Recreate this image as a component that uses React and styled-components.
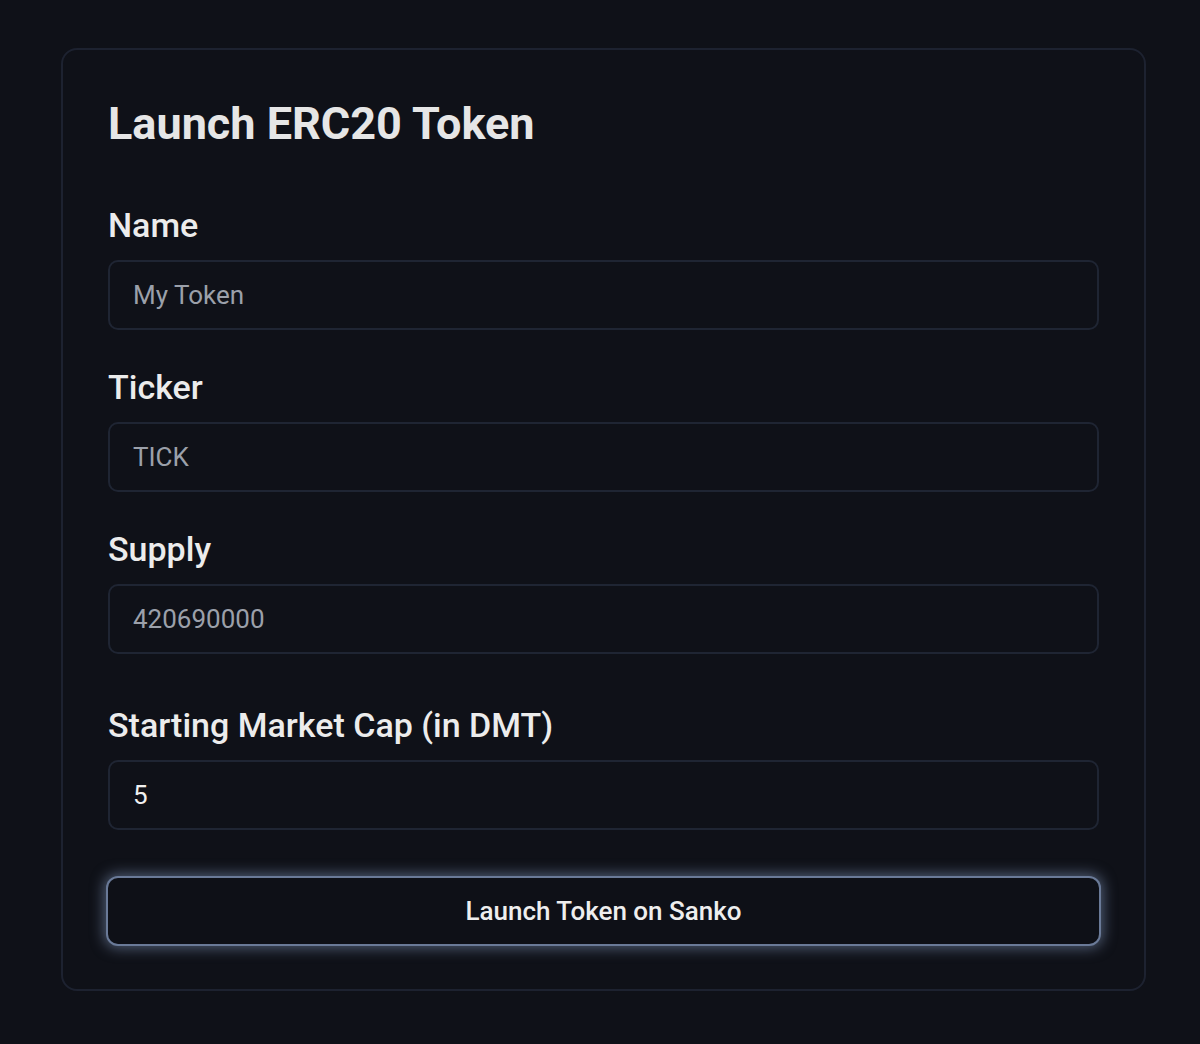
import React from 'react'
import styled, {createGlobalStyle} from "styled-components";

const GlobalStyle = createGlobalStyle`
  html, body {
    margin: 0;
    background: #0f1118;
  }
  body {
    font-family: Roboto, "Liberation Sans", sans-serif;
  }
`;

const fields = [
    {label: "Name", placeholder: "My Token"},
    {label: "Ticker", placeholder: "TICK"},
    {label: "Supply", placeholder: "420690000"},
];

export default function App() {
    return (
        <Page>
            <GlobalStyle/>
            <Card>
                <Title>Launch ERC20 Token</Title>
                {fields.map(f => (
                    <Field key={f.label}>
                        <Label>{f.label}</Label>
                        <Input placeholder={f.placeholder}/>
                    </Field>
                ))}
                <Field $last>
                    <Label>Starting Market Cap (in DMT)</Label>
                    <Input defaultValue="5"/>
                </Field>
                <LaunchButton>Launch Token on Sanko</LaunchButton>
            </Card>
        </Page>
    );
}

const Page = styled.div`
  min-height: 1044px;
  padding: 48px 54px 0 61px;
  box-sizing: border-box;
`;

const Card = styled.div`
  border: 2px solid #1d2230;
  border-radius: 16px;
  background: #0f1118;
  padding: 41px 45px 45px 45px;
  display: flex;
  flex-direction: column;
`;

const Title = styled.h1`
  margin: 0 0 48px;
  font-size: 45px;
  line-height: 66px;
  font-weight: 700;
  color: #e6e6e6;
`;

const Field = styled.div`
  display: flex;
  flex-direction: column;
  gap: 15px;
  margin-top: ${p => (p.$last ? "14px" : "0")};
  margin-bottom: ${p => (p.$last ? "48px" : "37px")};
`;

const Label = styled.label`
  font-size: 34px;
  line-height: 40px;
  font-weight: 500;
  color: #ececec;
`;

const Input = styled.input`
  height: 70px;
  box-sizing: border-box;
  border: 2px solid #1f2533;
  border-radius: 10px;
  background: #0f1118;
  padding: 0 23px;
  font-family: Roboto, "Liberation Sans", sans-serif;
  font-size: 26px;
  color: #f0f0f0;
  outline: none;
  &::placeholder {
    color: #9ba0aa;
  }
`;

const LaunchButton = styled.button`
  height: 66px;
  border: none;
  border-radius: 10px;
  background: #0e1017;
  color: #eeeeee;
  font-family: Roboto, "Liberation Sans", sans-serif;
  font-size: 26px;
  font-weight: 500;
  box-shadow: 0 0 0 2px #6a7a98, 0 0 14px 4px rgba(125, 145, 180, 0.6);
  cursor: pointer;
`;
